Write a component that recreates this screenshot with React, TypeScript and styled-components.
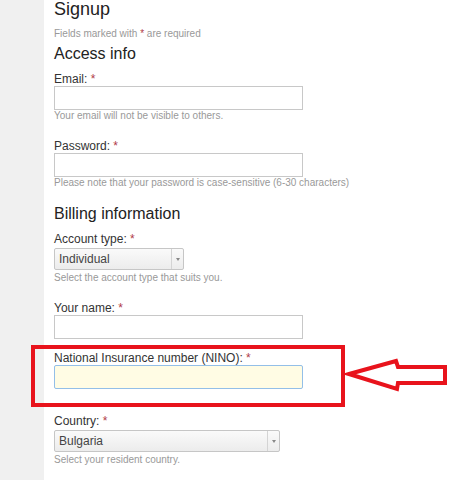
import styled, { createGlobalStyle } from "styled-components";

const GlobalStyle = createGlobalStyle`
  html, body {
    margin: 0;
    padding: 0;
    background: #ffffff;
  }
  body {
    font-family: "Liberation Sans", Arial, sans-serif;
    color: #333333;
  }
`;

const Page = styled.div`
  display: flex;
  min-height: 100vh;
  overflow: hidden;
`;

const Sidebar = styled.div`
  width: 44px;
  flex-shrink: 0;
  background-color: #f0f0f0;
`;

const Content = styled.div`
  flex: 1;
  padding-left: 10px;
`;

const Title = styled.h1`
  font-size: 18px;
  line-height: 20px;
  font-weight: normal;
  color: #222;
  margin: -1px 0 0 0;
`;

const Note = styled.p`
  font-size: 10px;
  line-height: 12px;
  color: #999;
  margin: 9px 0 0 0;
`;

const SectionTitle = styled.h2<{ $top?: number }>`
  font-size: 16px;
  line-height: 20px;
  font-weight: normal;
  color: #222;
  margin: ${(p) => p.$top ?? 4}px 0 8px 0;
`;

const Field = styled.div<{ $bottom?: number }>`
  position: relative;
  margin-bottom: ${(p) => p.$bottom ?? 12}px;
`;

const Label = styled.label`
  display: block;
  font-size: 12px;
  line-height: 14px;
  color: #333;
`;

const Req = styled.span`
  color: #b03a48;
`;

const TextInput = styled.input<{ $focused?: boolean }>`
  display: block;
  box-sizing: border-box;
  width: 249px;
  height: 24px;
  margin: 0;
  padding: 2px 4px;
  font-family: inherit;
  font-size: 12px;
  border: 1px solid ${(p) => (p.$focused ? "#93bfe8" : "#c8c8c8")};
  border-radius: ${(p) => (p.$focused ? "2px" : "0")};
  background: ${(p) => (p.$focused ? "#fffce4" : "#ffffff")};
  outline: none;
`;

const SelectBox = styled.div<{ $width: number }>`
  display: flex;
  box-sizing: border-box;
  width: ${(p) => p.$width}px;
  height: 22px;
  margin: 2px 0 2px 0;
  border: 1px solid #c6c6c6;
  border-radius: 2px;
  background: linear-gradient(#fafafa, #ececec);
  font-size: 12px;
  color: #444;
`;

const SelectValue = styled.div`
  flex: 1;
  display: flex;
  align-items: center;
  padding-left: 4px;
`;

const SelectArrow = styled.div`
  width: 11px;
  border-left: 1px solid #d4d4d4;
  display: flex;
  align-items: center;
  justify-content: center;
  &::after {
    content: "";
    border-left: 2.5px solid transparent;
    border-right: 2.5px solid transparent;
    border-top: 3px solid #888;
  }
`;

const Hint = styled.div`
  font-size: 10px;
  line-height: 12px;
  color: #999;
  padding-bottom: 5px;
`;

const RedBox = styled.div`
  position: absolute;
  left: -23px;
  top: -6px;
  width: 314px;
  height: 62px;
  box-sizing: border-box;
  border: 4px solid #e8131c;
  pointer-events: none;
`;

const Arrow = styled.svg`
  position: absolute;
  left: 286px;
  top: 4px;
  overflow: visible;
`;

const Select = ({ value, width }: { value: string; width: number }) => (
  <SelectBox $width={width}>
    <SelectValue>{value}</SelectValue>
    <SelectArrow />
  </SelectBox>
);

export default function App() {
  return (
    <>
      <GlobalStyle />
      <Page>
        <Sidebar />
        <Content>
          <Title>Signup</Title>
          <Note>
            Fields marked with <Req>*</Req> are required
          </Note>

          <SectionTitle>Access info</SectionTitle>
          <Field>
            <Label>
              Email: <Req>*</Req>
            </Label>
            <TextInput type="text" />
            <Hint>Your email will not be visible to others.</Hint>
          </Field>
          <Field>
            <Label>
              Password: <Req>*</Req>
            </Label>
            <TextInput type="password" />
            <Hint>
              Please note that your password is case-sensitive (6-30 characters)
            </Hint>
          </Field>

          <SectionTitle $top={-2}>Billing information</SectionTitle>
          <Field>
            <Label>
              Account type: <Req>*</Req>
            </Label>
            <Select value="Individual" width={130} />
            <Hint>Select the account type that suits you.</Hint>
          </Field>
          <Field>
            <Label>
              Your name: <Req>*</Req>
            </Label>
            <TextInput type="text" />
          </Field>
          <Field $bottom={25}>
            <Label>
              National Insurance number (NINO): <Req>*</Req>
            </Label>
            <TextInput type="text" $focused />
            <RedBox />
            <Arrow width="100" height="32" viewBox="0 0 100 32">
              <polygon
                points="9,19 56,6 58,12 105,12 105,28 58,28 57,34"
                fill="none"
                stroke="#e8131c"
                strokeWidth="4"
                strokeLinejoin="miter"
              />
            </Arrow>
          </Field>
          <Field>
            <Label>
              Country: <Req>*</Req>
            </Label>
            <Select value="Bulgaria" width={226} />
            <Hint>Select your resident country.</Hint>
          </Field>
        </Content>
      </Page>
    </>
  );
}
